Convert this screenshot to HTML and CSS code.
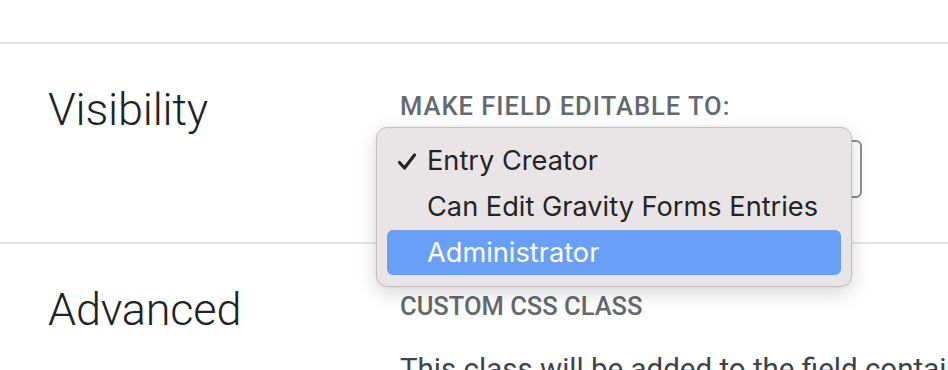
FILE: index.html
```html
<!DOCTYPE html>
<html>
<head>
<meta charset="utf-8">
<link rel="stylesheet" href="styles.css">
</head>
<body>
<div class="page">
  <div class="top"></div>
  <section class="section">
    <h2 class="heading">Visibility</h2>
    <div class="fields">
      <div class="label label-wide">MAKE FIELD EDITABLE TO:</div>
      <div class="select-wrap">
        <div class="select"></div>
        <div class="menu">
          <div class="item"><svg class="check" viewBox="0 0 20 20" width="20" height="20"><path d="M2.5 10.5 L7.5 16 L17.5 3" fill="none" stroke="#242424" stroke-width="3.2" stroke-linecap="round" stroke-linejoin="round"/></svg>Entry Creator</div>
          <div class="item">Can Edit Gravity Forms Entries</div>
          <div class="item active">Administrator</div>
        </div>
      </div>
    </div>
  </section>
  <section class="section">
    <h2 class="heading">Advanced</h2>
    <div class="fields">
      <div class="label">CUSTOM CSS CLASS</div>
      <p class="desc">This class will be added to the field container.</p>
    </div>
  </section>
</div>
</body>
</html>
```

FILE: styles.css
```css
html, body {
  margin: 0;
  padding: 0;
  background: #ffffff;
  overflow: hidden;
}
.page {
  width: 948px;
  height: 370px;
  overflow: hidden;
}
.top {
  height: 42px;
}
.section {
  border-top: 2px solid #e3e5e5;
  height: 198px;
  display: grid;
  grid-template-columns: 400px 1fr;
}
.heading {
  margin: 0;
  padding: 38px 0 0 48px;
  font-family: Roboto, "Noto Sans", sans-serif;
  font-weight: 300;
  font-size: 45px;
  line-height: 56px;
  color: #1d2327;
  letter-spacing: -0.2px;
}
.fields {
  padding-top: 47px;
  white-space: nowrap;
}
.label {
  font-family: Roboto, "Noto Sans", sans-serif;
  font-weight: 500;
  font-size: 25.5px;
  line-height: 30px;
  color: #646970;
}
.label-wide {
  letter-spacing: 1px;
}
.select-wrap {
  position: relative;
  margin-top: 19px;
}
.select {
  width: 462px;
  height: 58px;
  border: 2px solid #8c8f94;
  border-radius: 6px;
  box-sizing: border-box;
}
.menu {
  position: absolute;
  left: -24px;
  top: -13px;
  width: 476px;
  box-sizing: border-box;
  padding: 10px 10px 11px;
  background: #e9e4e5;
  border: 1px solid #c4c0c1;
  border-radius: 11px;
  box-shadow: 0 6px 20px rgba(0, 0, 0, 0.16), 0 0 3px rgba(0, 0, 0, 0.06);
  font-family: Inter, "Noto Sans", sans-serif;
  font-size: 27.2px;
  color: #242424;
}
.item {
  position: relative;
  height: 46px;
  line-height: 46px;
  padding-left: 40px;
  border-radius: 6px;
}
.item.active {
  background: #6a9ff8;
  color: #ffffff;
  height: 45px;
  line-height: 45px;
}
.check {
  position: absolute;
  left: 10px;
  top: 14px;
}
.desc {
  margin: 30px 0 0;
  font-family: Roboto, "Noto Sans", sans-serif;
  font-size: 29.5px;
  line-height: 36px;
  color: #3c434a;
}
```
